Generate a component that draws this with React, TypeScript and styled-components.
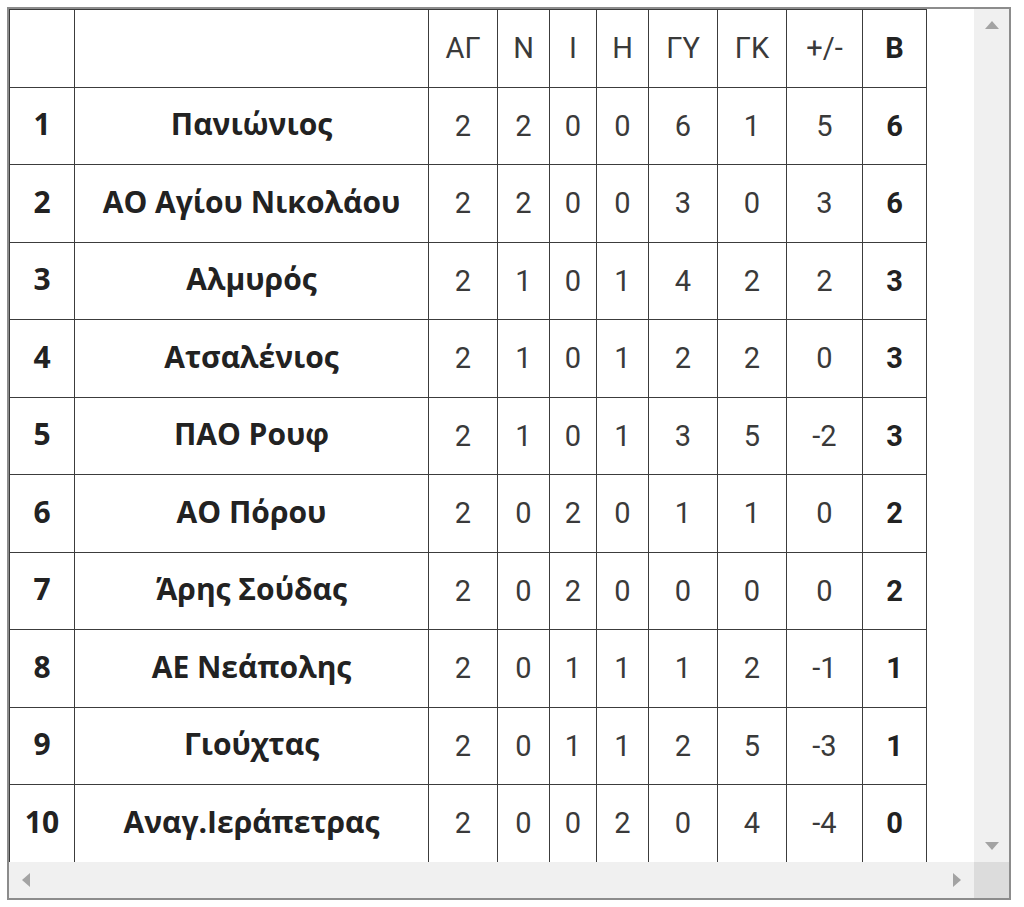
import styled, { createGlobalStyle } from "styled-components";

const GlobalStyle = createGlobalStyle`
  body {
    margin: 7px;
    background: #ffffff;
    font-family: Roboto, "Noto Sans", sans-serif;
  }
`;

type Team = {
  pos: number;
  name: string;
  stats: [number, number, number, number, number, number, number];
  points: number;
};

const teams: Team[] = [
  { pos: 1, name: "Πανιώνιος", stats: [2, 2, 0, 0, 6, 1, 5], points: 6 },
  { pos: 2, name: "ΑΟ Αγίου Νικολάου", stats: [2, 2, 0, 0, 3, 0, 3], points: 6 },
  { pos: 3, name: "Αλμυρός", stats: [2, 1, 0, 1, 4, 2, 2], points: 3 },
  { pos: 4, name: "Ατσαλένιος", stats: [2, 1, 0, 1, 2, 2, 0], points: 3 },
  { pos: 5, name: "ΠΑΟ Ρουφ", stats: [2, 1, 0, 1, 3, 5, -2], points: 3 },
  { pos: 6, name: "ΑΟ Πόρου", stats: [2, 0, 2, 0, 1, 1, 0], points: 2 },
  { pos: 7, name: "Άρης Σούδας", stats: [2, 0, 2, 0, 0, 0, 0], points: 2 },
  { pos: 8, name: "ΑΕ Νεάπολης", stats: [2, 0, 1, 1, 1, 2, -1], points: 1 },
  { pos: 9, name: "Γιούχτας", stats: [2, 0, 1, 1, 2, 5, -3], points: 1 },
  { pos: 10, name: "Αναγ.Ιεράπετρας", stats: [2, 0, 0, 2, 0, 4, -4], points: 0 },
];

const headers = ["ΑΓ", "Ν", "Ι", "Η", "ΓΥ", "ΓΚ", "+/-"];
const widths = [65, 354, 69, 52, 47, 52, 69, 69, 76, 64];

type Dir = "up" | "down" | "left" | "right";

const Arrow = ({ dir }: { dir: Dir }) => {
  const points = {
    up: "0,8 7,0 14,8",
    down: "0,0 14,0 7,8",
    left: "8,0 8,14 0,7",
    right: "0,0 8,7 0,14",
  }[dir];
  const vertical = dir === "up" || dir === "down";
  return (
    <svg
      width={vertical ? 14 : 8}
      height={vertical ? 8 : 14}
      viewBox={vertical ? "0 0 14 8" : "0 0 8 14"}
    >
      <polygon points={points} fill="#a3a3a3" />
    </svg>
  );
};

export default function App() {
  return (
    <>
      <GlobalStyle />
      <Frame>
        <Content>
          <Table>
            <colgroup>
              {widths.map((w, i) => (
                <col key={i} style={{ width: w }} />
              ))}
            </colgroup>
            <tbody>
              <Row>
                <Cell />
                <Cell />
                {headers.map((h) => (
                  <Cell key={h}>{h}</Cell>
                ))}
                <Cell $bold>Β</Cell>
              </Row>
              {teams.map((t) => (
                <Row key={t.pos}>
                  <TeamCell>{t.pos}</TeamCell>
                  <TeamCell>{t.name}</TeamCell>
                  {t.stats.map((s, i) => (
                    <Cell key={i}>{s}</Cell>
                  ))}
                  <Cell $bold>{t.points}</Cell>
                </Row>
              ))}
            </tbody>
          </Table>
        </Content>
        <VScroll>
          <ArrowBox>
            <Arrow dir="up" />
          </ArrowBox>
          <ArrowBox>
            <Arrow dir="down" />
          </ArrowBox>
        </VScroll>
        <HScroll>
          <ArrowBox>
            <Arrow dir="left" />
          </ArrowBox>
          <ArrowBox>
            <Arrow dir="right" />
          </ArrowBox>
        </HScroll>
        <Corner />
      </Frame>
    </>
  );
}

const Frame = styled.div`
  display: grid;
  grid-template-columns: 965px 35px;
  grid-template-rows: 853px 36px;
  width: 1000px;
  border: 2px solid #8c8c8c;
  background: #ffffff;
`;

const Content = styled.div`
  background: #ffffff;
  overflow: hidden;
`;

const Table = styled.table`
  border-collapse: collapse;
  table-layout: fixed;
  width: 917px;
  color: #333333;
`;

const Row = styled.tr`
  height: 77.5px;
`;

const Cell = styled.td<{ $bold?: boolean }>`
  border: 1px solid #3c3c3c;
  padding: 0;
  text-align: center;
  vertical-align: middle;
  font-family: Roboto, "Noto Sans", sans-serif;
  font-size: 29px;
  font-weight: ${(p) => (p.$bold ? 700 : 400)};
  color: ${(p) => (p.$bold ? "#222222" : "#3a3a3a")};
  white-space: nowrap;
`;

const TeamCell = styled(Cell)`
  padding-bottom: 4px;
  font-family: "Open Sans", "Noto Sans", sans-serif;
  font-size: 30px;
  font-weight: 700;
  color: #222222;
`;

const VScroll = styled.div`
  display: flex;
  flex-direction: column;
  justify-content: space-between;
  background: #f0f0f0;
  padding: 12px 0;
`;

const HScroll = styled.div`
  display: flex;
  justify-content: space-between;
  align-items: center;
  background: #f0f0f0;
  padding: 0 13px;
`;

const ArrowBox = styled.div`
  display: flex;
  align-items: center;
  justify-content: center;
`;

const Corner = styled.div`
  background: #dcdcdc;
`;
